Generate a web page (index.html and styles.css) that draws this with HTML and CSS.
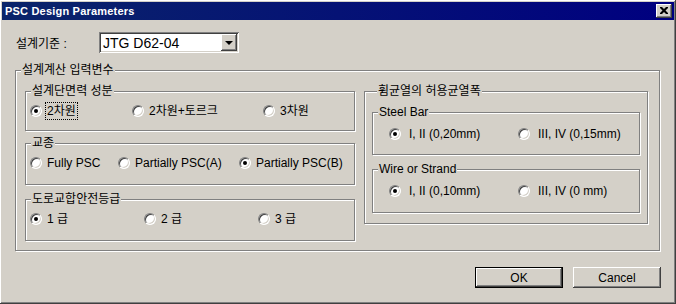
FILE: index.html
```html
<!DOCTYPE html>
<html lang="ko">
<head>
    <meta charset="UTF-8">
    <title>PSC Design Parameters</title>
    <link rel="stylesheet" href="styles.css">
</head>
<body>
    <div class="window">
        <div class="titlebar">
            <span class="title">PSC Design Parameters</span>
            <span class="close-btn">
                <svg width="8" height="7" viewBox="0 0 8 7"><path d="M0 0h2l2 2 2-2h2v1l-2.5 2.5 2.5 2.5v1h-2l-2-2-2 2h-2v-1l2.5-2.5-2.5-2.5z" fill="#000"/></svg>
            </span>
        </div>
        <div class="client">
            <div class="std-row">
                <span class="std-label">설계기준 :</span>
                <div class="combo">
                    <span class="combo-text">JTG D62-04</span>
                    <span class="combo-btn"><span class="arrow"></span></span>
                </div>
            </div>

            <div class="group outer">
                <span class="legend">설계계산 입력변수</span>
                <div class="outer-body">
                    <div class="left-col">
                        <div class="group g-force">
                            <span class="legend">설계단면력 성분</span>
                            <div class="radio-row cols-force">
                                <label class="opt"><span class="radio checked"></span><span class="focus">2차원</span></label>
                                <label class="opt"><span class="radio"></span>2차원+토르크</label>
                                <label class="opt"><span class="radio"></span>3차원</label>
                            </div>
                        </div>
                        <div class="group g-type">
                            <span class="legend">교종</span>
                            <div class="radio-row cols-type">
                                <label class="opt"><span class="radio"></span>Fully PSC</label>
                                <label class="opt"><span class="radio"></span>Partially PSC(A)</label>
                                <label class="opt"><span class="radio checked"></span>Partially PSC(B)</label>
                            </div>
                        </div>
                        <div class="group g-grade">
                            <span class="legend">도로교합안전등급</span>
                            <div class="radio-row cols-grade">
                                <label class="opt"><span class="radio checked"></span>1 급</label>
                                <label class="opt"><span class="radio"></span>2 급</label>
                                <label class="opt"><span class="radio"></span>3 급</label>
                            </div>
                        </div>
                    </div>

                    <div class="group crack">
                        <span class="legend">휨균열의 허용균열폭</span>
                        <div class="group g-steel">
                            <span class="legend">Steel Bar</span>
                            <div class="radio-row cols-crack">
                                <label class="opt wide"><span class="radio checked"></span>I, II (0,20mm)</label>
                                <label class="opt wide"><span class="radio"></span>III, IV (0,15mm)</label>
                            </div>
                        </div>
                        <div class="group g-wire">
                            <span class="legend">Wire or Strand</span>
                            <div class="radio-row cols-crack">
                                <label class="opt wide"><span class="radio checked"></span>I, II (0,10mm)</label>
                                <label class="opt wide"><span class="radio"></span>III, IV (0 mm)</label>
                            </div>
                        </div>
                    </div>
                </div>
            </div>

            <div class="buttons">
                <button class="btn default">OK</button>
                <button class="btn">Cancel</button>
            </div>
        </div>
    </div>
</body>
</html>
```

FILE: styles.css
```css
* {
    box-sizing: border-box;
}
body {
    margin: 0;
    font-family: "Liberation Sans", "Noto Sans CJK KR", sans-serif;
    font-size: 12px;
    color: #000;
    background: #d4d0c8;
}
.window {
    width: 676px;
    height: 304px;
    background: #d4d0c8;
    padding: 2px;
    box-shadow: inset -1px -1px 0 #404040, inset 1px 1px 0 #fff, inset -2px -2px 0 #808080;
}
.titlebar {
    height: 18px;
    background: linear-gradient(to right, #0a246a, #000080);
    display: flex;
    align-items: center;
    justify-content: space-between;
    padding: 0 2px 0 3px;
}
.title {
    color: #fff;
    font-weight: bold;
    font-size: 11px;
    letter-spacing: 0.2px;
}
.close-btn {
    width: 16px;
    height: 14px;
    background: #d4d0c8;
    box-shadow: inset -1px -1px 0 #404040, inset 1px 1px 0 #fff, inset -2px -2px 0 #808080;
    display: flex;
    align-items: center;
    justify-content: center;
    padding: 0 1px 1px 0;
}
.client {
    padding: 12px 0 0 13px;
}
.std-row {
    display: flex;
    align-items: center;
    height: 21px;
}
.std-label {
    width: 84px;
    padding-left: 1px;
}
.combo {
    width: 140px;
    height: 21px;
    background: #fff;
    display: flex;
    align-items: center;
    justify-content: space-between;
    padding: 2px;
    box-shadow: inset 1px 1px 0 #808080, inset -1px -1px 0 #fff, inset 2px 2px 0 #404040, inset -2px -2px 0 #d4d0c8;
}
.combo-text {
    padding-left: 2px;
    font-size: 14px;
}
.combo-btn {
    width: 16px;
    height: 17px;
    background: #d4d0c8;
    box-shadow: inset -1px -1px 0 #404040, inset 1px 1px 0 #fff, inset -2px -2px 0 #808080;
    display: flex;
    align-items: center;
    justify-content: center;
}
.arrow {
    width: 0;
    height: 0;
    border-left: 4px solid transparent;
    border-right: 4px solid transparent;
    border-top: 4px solid #000;
    margin: 1px 1px 0 0;
}

/* etched group boxes */
.group {
    border: 1px solid #808080;
    box-shadow: 1px 1px 0 #fff, inset 1px 1px 0 #fff;
}
.legend {
    display: block;
    width: fit-content;
    margin: -8px 0 0 5px;
    padding: 0 1px;
    line-height: 14px;
    background: #d4d0c8;
}
.outer {
    margin-top: 17px;
    width: 645px;
    height: 181px;
}
.outer-body {
    display: flex;
    padding: 14px 0 0 9px;
    gap: 9px;
}
.left-col {
    display: flex;
    flex-direction: column;
    width: 330px;
}
.g-force {
    height: 40px;
}
.g-type {
    height: 42px;
    margin-top: 12px;
}
.g-grade {
    height: 42px;
    margin-top: 14px;
}
.radio-row {
    display: grid;
    margin-top: 6px;
    padding-left: 4px;
    line-height: 14px;
}
.cols-force {
    grid-template-columns: 102px 131px auto;
}
.cols-type {
    grid-template-columns: 88px 121px auto;
}
.cols-grade {
    grid-template-columns: 114px 114px auto;
}
.opt {
    display: flex;
    align-items: center;
    white-space: nowrap;
}
.radio {
    position: relative;
    width: 12px;
    height: 12px;
    margin-right: 5px;
    border-radius: 50%;
    background: #fff;
    border: 1px solid;
    border-color: #808080 #fff #fff #808080;
    box-shadow: inset 1px 1px 0 #404040, inset -1px -1px 0 #d4d0c8;
    flex: none;
}
.radio.checked::after {
    content: "";
    position: absolute;
    left: 3px;
    top: 3px;
    width: 4px;
    height: 4px;
    border-radius: 50%;
    background: #000;
}
.focus {
    outline: 1px dotted #000;
    outline-offset: 1px;
}
.crack {
    width: 284px;
    height: 133px;
    padding: 0 7px;
}
.g-steel {
    height: 43px;
    margin-top: 14px;
}
.g-wire {
    height: 44px;
    margin-top: 14px;
}
.cols-crack {
    grid-template-columns: 129px auto;
    padding-left: 16px;
    margin-top: 8px;
}
.wide .radio {
    margin-right: 8px;
}
.buttons {
    display: flex;
    justify-content: flex-end;
    gap: 10px;
    padding-right: 13px;
    margin-top: 16px;
}
.btn {
    width: 88px;
    height: 21px;
    font-family: "Liberation Sans", sans-serif;
    font-size: 12px;
    background: #d4d0c8;
    border: none;
    padding: 0;
    box-shadow: inset -1px -1px 0 #404040, inset 1px 1px 0 #fff, inset -2px -2px 0 #808080;
}
.btn.default {
    border: 1px solid #000;
}
```
